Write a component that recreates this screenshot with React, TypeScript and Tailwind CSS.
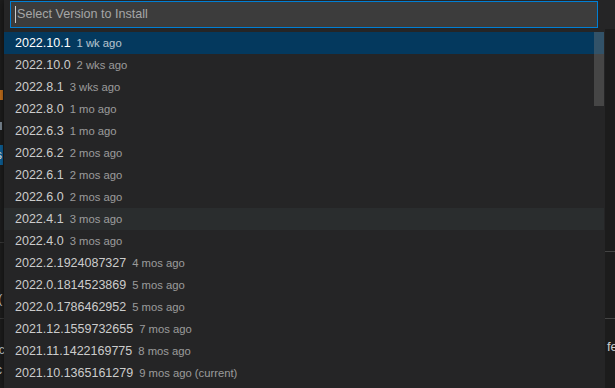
type Version = {
  label: string;
  description: string;
};

const versions: Version[] = [
  { label: "2022.10.1", description: "1 wk ago" },
  { label: "2022.10.0", description: "2 wks ago" },
  { label: "2022.8.1", description: "3 wks ago" },
  { label: "2022.8.0", description: "1 mo ago" },
  { label: "2022.6.3", description: "1 mo ago" },
  { label: "2022.6.2", description: "2 mos ago" },
  { label: "2022.6.1", description: "2 mos ago" },
  { label: "2022.6.0", description: "2 mos ago" },
  { label: "2022.4.1", description: "3 mos ago" },
  { label: "2022.4.0", description: "3 mos ago" },
  { label: "2022.2.1924087327", description: "4 mos ago" },
  { label: "2022.0.1814523869", description: "5 mos ago" },
  { label: "2022.0.1786462952", description: "5 mos ago" },
  { label: "2021.12.1559732655", description: "7 mos ago" },
  { label: "2021.11.1422169775", description: "8 mos ago" },
  { label: "2021.10.1365161279", description: "9 mos ago (current)" },
];

const SELECTED = 0;
const HOVERED = 8;

// Bits of the editor that peek out on the left of the quick pick
function LeftEdge() {
  return (
    <div className="w-[4px] shrink-0 flex flex-col overflow-hidden bg-[#1e1e1e]">
      <div className="h-[90px]" />
      <div className="h-[10px] w-[3px] bg-[#c9721c]" />
      <div className="h-[22px]" />
      <div className="h-[8px] w-[2px] bg-[#7f8c99]" />
      <div className="h-[15px]" />
      <div className="h-[20px] w-[3px] bg-[#0e639c] overflow-hidden text-[12px] leading-[20px] text-white">
        <span className="ml-[-4px]">s</span>
      </div>
      <div className="h-[77px]" />
      <div className="h-px bg-[#3c3c3c]" />
      <div className="h-[49px]" />
      <div className="h-[14px] overflow-hidden text-[13px] leading-[14px] text-[#cccccc]">
        <span className="ml-[-2px]">(</span>
      </div>
      <div className="h-[12px]" />
      <div className="h-px bg-[#3c3c3c]" />
      <div className="h-[24px]" />
      <div className="h-[14px] overflow-hidden text-[12px] leading-[14px] text-[#cccccc]">
        <span className="ml-[-4px]">ic</span>
      </div>
      <div className="h-[6px]" />
      <div className="h-[14px] overflow-hidden text-[12px] leading-[14px] text-[#cccccc]">
        <span className="ml-[-4px]">c</span>
      </div>
    </div>
  );
}

function RightEdge() {
  return (
    <div className="w-[10px] shrink-0 flex flex-col overflow-hidden bg-[#1c1c1c]">
      <div className="h-[29px] bg-[#252526]" />
      <div className="h-[222px]" />
      <div className="h-px bg-[#444444]" />
      <div className="h-[66px]" />
      <div className="h-px bg-[#444444]" />
      <div className="h-[20px]" />
      <div className="pl-[2px] text-[13px] leading-[16px] text-[#cccccc] whitespace-nowrap">
        fe
      </div>
    </div>
  );
}

function VersionRow({ version, index }: { version: Version; index: number }) {
  const selected = index === SELECTED;
  const hovered = index === HOVERED;

  return (
    <div
      className={`h-[22px] flex items-center pl-[11px] whitespace-nowrap ${
        selected ? "bg-[#04395e] text-white" : hovered ? "bg-[#2a2d2e] text-[#cccccc]" : "text-[#cccccc]"
      }`}
    >
      <span className="text-[12.5px] leading-[22px]">{version.label}</span>
      <span className="ml-[6px] text-[11.25px] leading-[22px] opacity-70">
        {version.description}
      </span>
    </div>
  );
}

export default function App() {
  return (
    <div className="w-[615px] h-[388px] flex overflow-hidden bg-[#1e1e1e] font-['Liberation_Sans',Arial,sans-serif]">
      <LeftEdge />

      {/* Quick pick widget */}
      <div className="w-[601px] shrink-0 flex flex-col bg-[#252526] shadow-[0_0_8px_rgba(0,0,0,0.6)]">
        {/* Input box */}
        <div className="pt-[1px] pl-[6px] pr-[7px] pb-[4px]">
          <div className="h-[27px] flex items-center pl-[4px] border border-[#007fd4] bg-[#3c3c3c]">
            <span className="w-px h-[17px] bg-[#cccccc]" />
            <span className="ml-px text-[12.6px] text-[#a6a6a6] whitespace-nowrap">
              Select Version to Install
            </span>
          </div>
        </div>

        {/* Version list */}
        <div className="relative pr-[1px]">
          {versions.map((v, i) => (
            <VersionRow key={v.label} version={v} index={i} />
          ))}
          {/* Scrollbar slider */}
          <div className="absolute top-0 right-[1px] w-[10px] h-[74px] bg-[rgba(121,121,121,0.4)]" />
        </div>
      </div>

      <RightEdge />
    </div>
  );
}
